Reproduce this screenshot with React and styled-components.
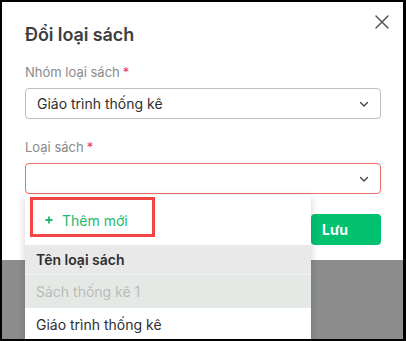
import React from "react";
import styled, { createGlobalStyle } from "styled-components";

const GlobalStyle = createGlobalStyle`
  html, body {
    margin: 0;
    padding: 0;
    background: #ffffff;
  }
  body {
    font-family: Inter, "Noto Sans", "Liberation Sans", sans-serif;
  }
`;

const Frame = styled.div`
  position: relative;
  width: 406px;
  height: 341px;
  box-sizing: border-box;
  border-style: solid;
  border-color: #000000;
  border-width: 2px 3px 2px 2px;
  background: #8c8c8c;
  overflow: hidden;
`;

const Modal = styled.div`
  display: flex;
  flex-direction: column;
  height: 258px;
  box-sizing: border-box;
  padding: 0 22px 0 23px;
  background: #ffffff;
`;

const Header = styled.div`
  display: flex;
  justify-content: space-between;
  align-items: flex-start;
  height: 62px;
`;

const Title = styled.h2`
  margin: 22px 0 0;
  font-size: 18px;
  font-weight: 600;
  color: #3d3d3d;
  letter-spacing: -0.1px;
`;

const CloseButton = styled.button`
  margin: 10px -11px 0 0;
  padding: 0;
  border: none;
  background: none;
  width: 20px;
  height: 20px;
  display: flex;
  align-items: center;
  justify-content: center;
`;

const Field = styled.div`
  display: flex;
  flex-direction: column;
  gap: 8px;
  margin-bottom: ${(p) => p.$gap || 0}px;
`;

const Label = styled.label`
  font-size: 13px;
  color: #8a8a8a;
  line-height: 16px;
`;

const Required = styled.span`
  color: #f0343e;
  margin-left: 3px;
`;

const Select = styled.div`
  display: flex;
  align-items: center;
  justify-content: space-between;
  height: 31px;
  box-sizing: border-box;
  padding: 0 10px 0 11px;
  border: 1px solid ${(p) => (p.$error ? "#f06a6a" : "#bdbdc2")};
  border-radius: 4px;
  font-size: 14px;
  color: #2e2e2e;
`;

const Footer = styled.div`
  display: flex;
  justify-content: flex-end;
  margin-top: 20px;
`;

const SaveButton = styled.button`
  width: 70px;
  height: 31px;
  border: none;
  border-radius: 4px;
  background: #02c16f;
  color: #ffffff;
  font-family: inherit;
  font-size: 14px;
  font-weight: 700;
  text-align: left;
  padding: 0 0 0 11px;
`;

const Dropdown = styled.div`
  position: absolute;
  left: 23px;
  top: 193px;
  width: 286px;
  background: #ffffff;
  border-radius: 3px;
  box-shadow: 0 2px 8px rgba(0, 0, 0, 0.18);
  display: flex;
  flex-direction: column;
`;

const AddRow = styled.div`
  display: flex;
  align-items: center;
  gap: 9px;
  height: 50px;
  padding: 0 0 0 20px;
  font-size: 14px;
  color: #1cb96f;
  box-sizing: border-box;
`;

const Highlight = styled.div`
  position: absolute;
  left: 5px;
  top: 2px;
  width: 125px;
  height: 40px;
  box-sizing: border-box;
  border: 3px solid #f24546;
`;

const Row = styled.div`
  display: flex;
  align-items: center;
  height: ${(p) => p.$h || 32}px;
  padding: 0 11px;
  font-size: 14px;
  font-weight: ${(p) => (p.$head ? 600 : 400)};
  color: ${(p) => p.$color || "#2e2e2e"};
  background: ${(p) => p.$bg || "#ffffff"};
  border-bottom: ${(p) => (p.$line ? "1px solid #f2f2f2" : "none")};
`;

const Chevron = () => (
  <svg width="12" height="12" viewBox="0 0 12 12" fill="none">
    <path d="M2.5 4.5 L6 8 L9.5 4.5" stroke="#444655" strokeWidth="1.4" strokeLinecap="round" strokeLinejoin="round" />
  </svg>
);

const CloseIcon = () => (
  <svg width="16" height="16" viewBox="0 0 16 16" fill="none">
    <path d="M2 2 L14 14 M14 2 L2 14" stroke="#555555" strokeWidth="1.5" strokeLinecap="round" />
  </svg>
);

const PlusIcon = () => (
  <svg width="8" height="8" viewBox="0 0 8 8" fill="none">
    <path d="M4 0.5 V7.5 M0.5 4 H7.5" stroke="#1cb96f" strokeWidth="1.8" />
  </svg>
);

export default function App() {
  return (
    <>
      <GlobalStyle />
      <Frame>
        <Modal>
          <Header>
            <Title>Đổi loại sách</Title>
            <CloseButton>
              <CloseIcon />
            </CloseButton>
          </Header>
          <Field $gap={20}>
            <Label>
              Nhóm loại sách<Required>*</Required>
            </Label>
            <Select>
              Giáo trình thống kê
              <Chevron />
            </Select>
          </Field>
          <Field>
            <Label>
              Loại sách<Required>*</Required>
            </Label>
            <Select $error>
              <span />
              <Chevron />
            </Select>
          </Field>
          <Footer>
            <SaveButton>Lưu</SaveButton>
          </Footer>
        </Modal>
        <Dropdown>
          <AddRow>
            <PlusIcon />
            Thêm mới
          </AddRow>
          <Highlight />
          <Row $head $bg="#e9e9e9" $h={29} $line>
            Tên loại sách
          </Row>
          <Row $bg="#e4e9e5" $color="#b9bcba" $h={33}>
            Sách thống kê 1
          </Row>
          <Row $h={32}>Giáo trình thống kê</Row>
        </Dropdown>
      </Frame>
    </>
  );
}
